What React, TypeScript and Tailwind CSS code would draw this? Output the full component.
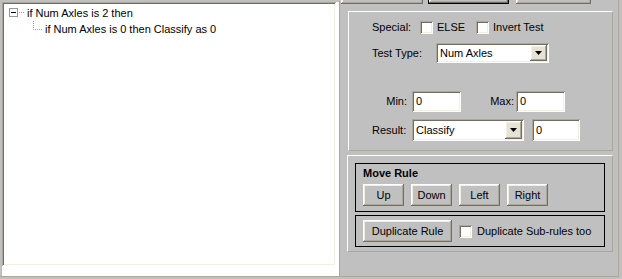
const sunken =
  "shadow-[inset_1px_1px_0_#aca899,inset_-1px_-1px_0_#ffffff,inset_2px_2px_0_#716f64,inset_-2px_-2px_0_#f1efe2]";
const raised =
  "shadow-[inset_-1px_-1px_0_#716f64,inset_1px_1px_0_#ffffff,inset_-2px_-2px_0_#aca899,inset_2px_2px_0_#f1efe2]";

function CheckBox() {
  return <div className={`w-[13px] h-[13px] shrink-0 bg-white ${sunken}`} />;
}

function TextBox({ value, className }: { value: string; className: string }) {
  return (
    <div className={`bg-white flex items-center pl-[4px] ${sunken} ${className}`}>
      {value}
    </div>
  );
}

function Combo({ value, className }: { value: string; className: string }) {
  return (
    <div className={`bg-white flex items-center p-[2px] ${sunken} ${className}`}>
      <span className="flex-1 pl-[2px]">{value}</span>
      <div className={`w-[17px] h-full bg-[#e6e3d6] flex items-center justify-center ${raised}`}>
        <svg width="7" height="4" viewBox="0 0 7 4">
          <path d="M0 0h7L3.5 4z" fill="#000" />
        </svg>
      </div>
    </div>
  );
}

function Btn({ label, className }: { label: string; className: string }) {
  return (
    <div className={`h-[22px] flex items-center justify-center bg-[#c0c0c0] ${raised} ${className}`}>
      {label}
    </div>
  );
}

export default function App() {
  return (
    <div className="w-[622px] h-[279px] bg-[#c0c0c0] overflow-hidden text-[11px] leading-[13px] text-black font-['Liberation_Sans',Arial,sans-serif]">
      <div className="flex w-[619px] h-[277px] border-r border-b border-[#aca899]">
        {/* tree view */}
        <div className="w-[340px] h-full bg-white border-t-2 border-l-2 border-[#c0c0c0] border-r border-r-[#aca899]">
          <div className={`w-[334px] h-[264px] bg-white pt-[3px] ${sunken}`}>
            <div className="flex items-center h-[16px] pl-[7px]">
              <svg width="17" height="16" viewBox="0 0 17 16" className="shrink-0">
                <rect x="0.5" y="3.5" width="8" height="8" fill="#fff" stroke="#919b9c" />
                <rect x="2" y="7" width="5" height="1" fill="#000" />
                <rect x="10" y="7" width="1" height="1" fill="#a0a0a0" />
                <rect x="12" y="7" width="1" height="1" fill="#a0a0a0" />
                <rect x="14" y="7" width="1" height="1" fill="#a0a0a0" />
              </svg>
              <span className="ml-[1px]">if Num Axles is 2 then</span>
            </div>
            <div className="flex items-center h-[16px] pl-[29px]">
              <svg width="13" height="16" viewBox="0 0 13 16" className="shrink-0">
                {[0, 2, 4, 6].map((y) => (
                  <rect key={y} x="2" y={y} width="1" height="1" fill="#a0a0a0" />
                ))}
                {[2, 4, 6, 8, 10].map((x) => (
                  <rect key={x} x={x} y="8" width="1" height="1" fill="#a0a0a0" />
                ))}
              </svg>
              <span className="ml-[1px]">if Num Axles is 0 then Classify as 0</span>
            </div>
          </div>
        </div>

        {/* right pane */}
        <div className="flex-1 flex flex-col">
          <div className="flex h-[4px] overflow-hidden items-end">
            <div className={`ml-[1px] w-[82px] h-[23px] shrink-0 bg-[#c0c0c0] ${raised}`} />
            <div className="ml-[5px] w-[81px] h-[23px] shrink-0 border border-black">
              <div className={`w-full h-full bg-[#c0c0c0] ${raised}`} />
            </div>
            <div className={`ml-[7px] w-[75px] h-[23px] shrink-0 bg-[#c0c0c0] ${raised}`} />
          </div>

          {/* test panel */}
          <div className="ml-[8px] mt-[7px] w-[265px] h-[140px] border-t border-l border-white border-r border-b border-r-[#aca899] border-b-[#aca899] pl-[23px] flex flex-col">
            <div className="flex items-center h-[13px] mt-[9px]">
              <span className="w-[48px]">Special:</span>
              <CheckBox />
              <span className="ml-[4px] w-[39px]">ELSE</span>
              <CheckBox />
              <span className="ml-[4px]">Invert Test</span>
            </div>
            <div className="flex items-center mt-[9px]">
              <span className="w-[64px]">Test Type:</span>
              <Combo value="Num Axles" className="w-[113px] h-[20px]" />
            </div>
            <div className="flex items-center mt-[28px]">
              <span className="w-[40px] text-right pr-[5px]">Min:</span>
              <TextBox value="0" className="w-[49px] h-[21px]" />
              <span className="w-[55px] text-right pr-[2px]">Max:</span>
              <TextBox value="0" className="w-[49px] h-[21px]" />
            </div>
            <div className="flex items-center mt-[7px]">
              <span className="w-[40px]">Result:</span>
              <Combo value="Classify" className="w-[112px] h-[22px]" />
              <TextBox value="0" className="ml-[8px] w-[48px] h-[22px]" />
            </div>
          </div>

          {/* move panel */}
          <div className="ml-[7px] mt-[4px] w-[266px] h-[97px] border-t border-l border-white border-r border-b border-r-[#aca899] border-b-[#aca899] pt-[7px] pl-[7px] flex flex-col">
            <div className="w-[250px] h-[49px] border border-black pl-[7px] pt-[3px] flex flex-col">
              <span className="font-bold">Move Rule</span>
              <div className="flex gap-[7px] mt-[4px]">
                <Btn label="Up" className="w-[41px]" />
                <Btn label="Down" className="w-[41px]" />
                <Btn label="Left" className="w-[41px]" />
                <Btn label="Right" className="w-[41px]" />
              </div>
            </div>
            <div className="mt-[3px] w-[250px] h-[32px] border border-black pl-[7px] flex items-center">
              <Btn label="Duplicate Rule" className="w-[89px]" />
              <div className="ml-[7px]">
                <CheckBox />
              </div>
              <span className="ml-[5px]">Duplicate Sub-rules too</span>
            </div>
          </div>
        </div>
      </div>
    </div>
  );
}
